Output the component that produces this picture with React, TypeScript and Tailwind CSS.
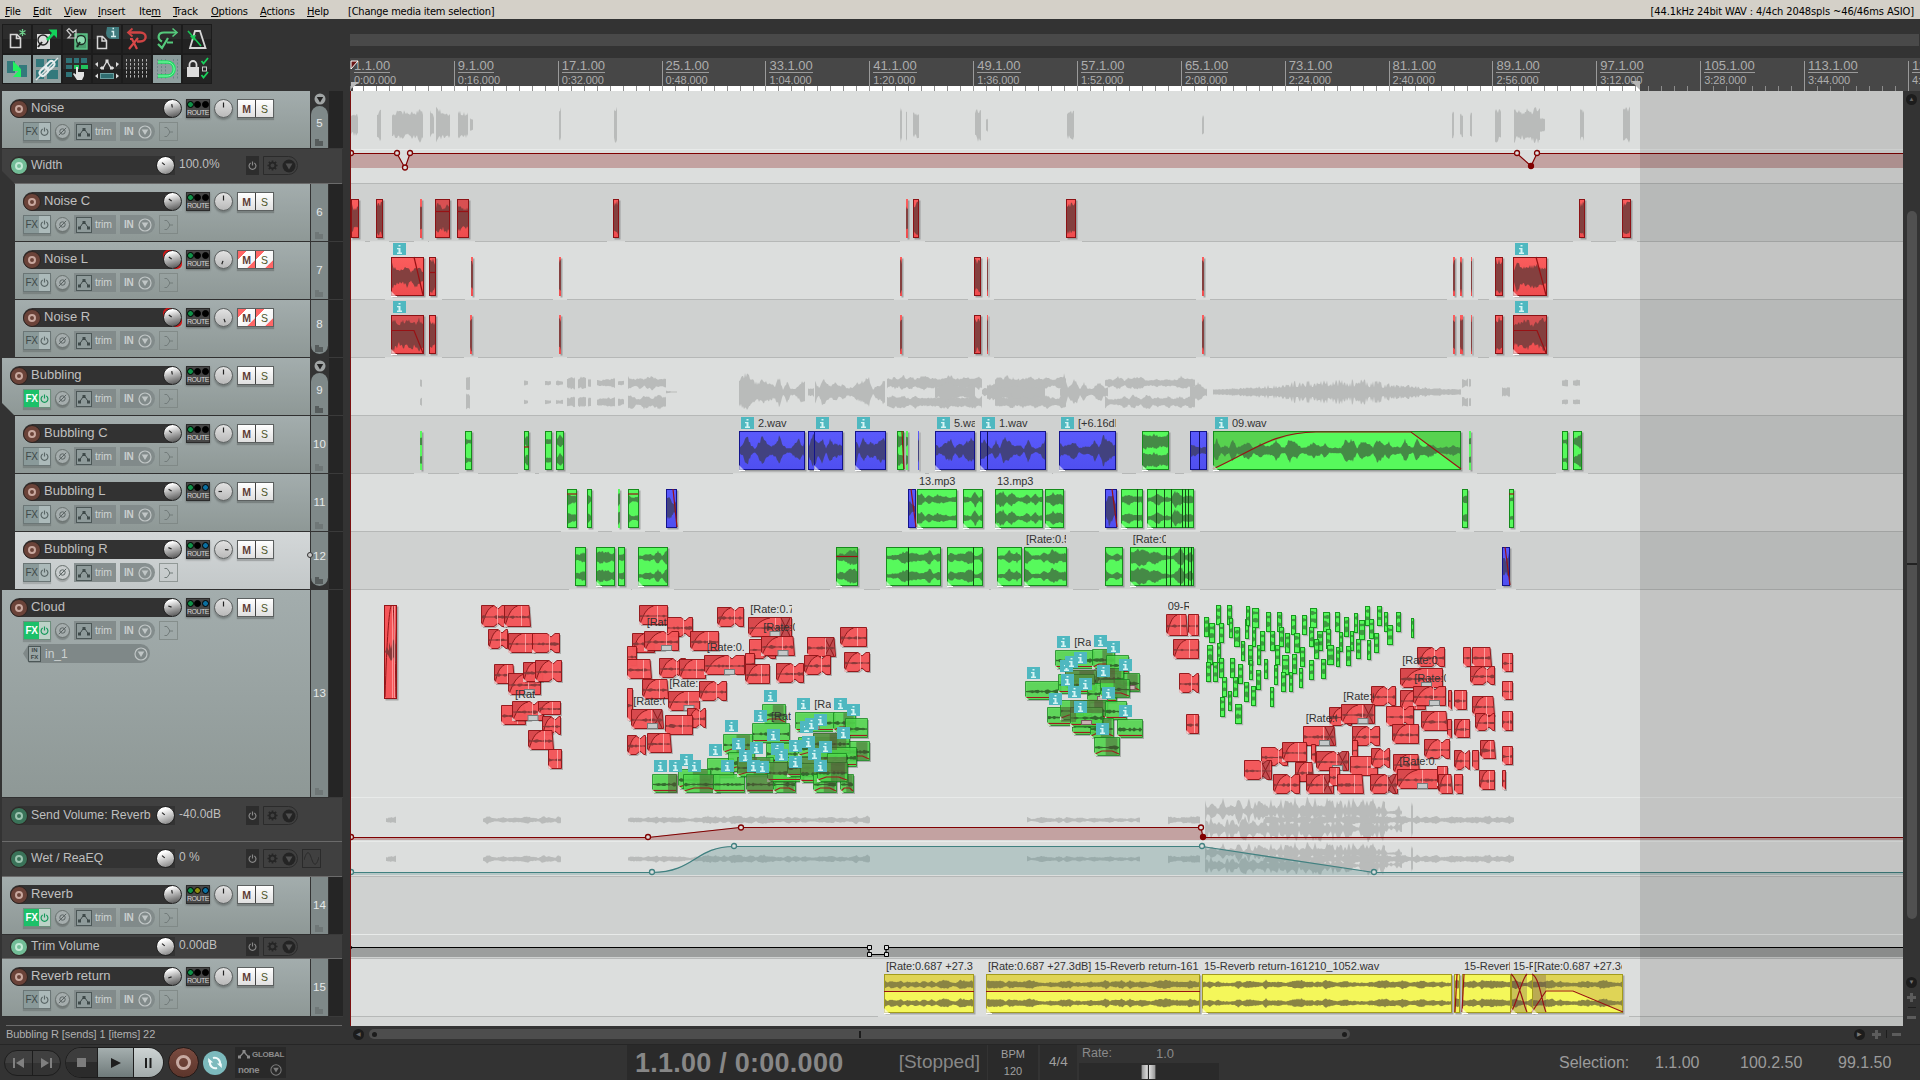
import React from "react";

/* ---------- deterministic wave forms ---------- */

function rng(seed: number) {
  let s = (seed * 7919 + 12345) % 2147483647;
  return () => {
    s = (s * 16807) % 2147483647;
    return s / 2147483647;
  };
}

function wavePath(w: number, mid: number, amp: number, seed: number, floor = 0.25, x0 = 0, lump = 4, pow = 1.7) {
  const r = rng(seed + 3);
  for (let i = 0; i < 5; i++) r();
  const n = Math.max(2, Math.round(w));
  const knots: number[] = [];
  for (let i = 0; i <= n / lump + 2; i++) knots.push(floor + (1 - floor) * Math.pow(r(), pow));
  const up: string[] = [];
  const dn: string[] = [];
  for (let i = 0; i <= n; i++) {
    const k = i / lump;
    const a = Math.floor(k);
    const t = k - a;
    const base = knots[a] * (1 - t) + knots[a + 1] * t;
    const u = Math.max(0.5, amp * base * (0.65 + 0.35 * r()));
    const d = Math.max(0.5, amp * base * (0.65 + 0.35 * r()));
    up.push((x0 + (i * w) / n).toFixed(1) + "," + (mid - u).toFixed(1));
    dn.push((x0 + (i * w) / n).toFixed(1) + "," + (mid + d).toFixed(1));
  }
  return "M" + up.join("L") + "L" + dn.reverse().join("L") + "Z";
}

/* ---------- small shared parts ---------- */

const Power = ({ c, s = 9 }: { c: string; s?: number }) => (
  <svg width={s} height={s} viewBox="0 0 10 10" fill="none" stroke={c} strokeWidth="1.3">
    <path d="M3 2.2A3.8 3.8 0 1 0 7 2.2M5 .5V5" />
  </svg>
);

const Knob = ({ angle, kind = "vol", ring = false, bright = false }: { angle: number; kind?: string; ring?: boolean; bright?: boolean }) => (
  <div
    className={
      "flex size-[19px] shrink-0 items-center justify-center " +
      (ring ? "rounded-[5px] bg-[linear-gradient(135deg,#cf1616_24%,transparent_25%,transparent_78%,#cf1616_79%)]" : "rounded-full")
    }
  >
    <div
      className={
        "flex size-full items-center justify-center rounded-full border " +
        (kind === "vol"
          ? "border-[#222] " + (bright ? "bg-[linear-gradient(160deg,#fff_20%,#c8c8c8_55%,#777_100%)]" : "bg-[linear-gradient(165deg,#fff_15%,#b5b5b5_48%,#555_95%)]")
          : "border-[#5a5e5e] bg-[linear-gradient(180deg,#e2e2e2,#b9b9b9)] shadow-[0_2px_2px_rgba(0,0,0,.25)]")
      }
    >
      <svg width="17" height="17" viewBox="-8.5 -8.5 17 17" className="shrink-0">
        <path d={kind === "vol" ? "M0 -1V-4.5" : Math.abs(angle) > 1 ? "M0 -1.5V-5" : "M0 -1V-6"} stroke="#222" strokeWidth="1.2" transform={`rotate(${angle})`} />
      </svg>
    </div>
  </div>
);

const Rec = ({ on }: { on: string }) => (
  <div
    className={
      "flex size-[18px] shrink-0 items-center justify-center rounded-full border border-[#2c2422] " +
      (on === "rec" ? "bg-[#6b4339]" : on === "env" ? "bg-[#3a7359]" : "bg-[#72bd97]")
    }
  >
    <div className={"size-[8px] rounded-full border-2 " + (on === "rec" ? "border-[#c9a89f]" : on === "env" ? "border-[#9cc4b0]" : "border-[#c4ead6]")} />
  </div>
);

const DownCircle = ({ c, s = 14 }: { c: string; s?: number }) => (
  <svg width={s} height={s} viewBox="0 0 14 14">
    <circle cx="7" cy="7" r="6" fill="none" stroke={c} strokeWidth="1.2" />
    <path d="M3.7 4.5H10.3L7 10Z" fill={c} />
  </svg>
);

/* ---------- track control panels ---------- */

type Track = {
  name: string;
  idx: string;
  h: number;
  child?: boolean;
  selected?: boolean;
  fx?: boolean;
  vol: number;
  pan: number;
  dots?: string[];
  striped?: boolean;
  input?: boolean;
  folder?: "top" | "last";
  cut?: boolean;
  dimFolder?: boolean;
};

const G = "#109048";
const B = "#0b6fa0";
const K = "#000";

function TrackPanel({ t }: { t: Track }) {
  return (
    <div className="flex" style={{ height: t.h }}>
      <div
        className={
          "flex flex-col border-b border-[#303030] pt-[8px] " +
          (t.child ? "ml-[15px] w-[295px] pl-[8px] " : "ml-[2px] w-[308px] pl-[8px] ") +
          (t.cut ? "[clip-path:polygon(0_0,100%_0,100%_100%,13px_100%,0_calc(100%-13px))] " : "") +
          (t.selected ? "bg-[linear-gradient(180deg,#d3d7d8,#c3c8c9)]" : "bg-[linear-gradient(180deg,#a3adad,#8e9896)]")
        }
      >
        <div className="flex h-[19px] items-center">
          <div className={"flex h-[19px] items-center justify-between rounded-l-full bg-[#323232] " + (t.child ? "w-[159px]" : "w-[172px]")}>
            <Rec on="rec" />
            <span className="mt-[-2px] ml-[3px] flex-1 whitespace-pre text-[13px] leading-[18px] text-[#c0c0c0]">{t.name}</span>
            <div className={"flex h-[19px] w-[20px] justify-end " + (t.selected ? "bg-[linear-gradient(90deg,#323232_50%,#d0d4d5_50%)]" : "bg-[linear-gradient(90deg,#323232_50%,#a0aaaa_50%)]")}>
              <Knob angle={t.vol} ring={t.striped} />
            </div>
          </div>
          <div className="ml-[4px] flex h-[19px] w-[24px] flex-col items-center border border-[#2b2b2b] bg-[#474747] shadow-[0_1px_2px_rgba(0,0,0,.3)]">
            <div className="flex h-[8px] w-full items-center justify-around">
              {(t.dots || [G, K, K]).map((d, i) => (
                <div key={i} className="size-[7px] rounded-full border border-black" style={{ backgroundColor: d }} />
              ))}
            </div>
            <span className="text-[7px] leading-[9px] tracking-[-0.5px] text-[#d4d4d4]">ROUTE</span>
          </div>
          <div className="ml-[4px]">
            <Knob angle={t.pan} kind="pan" />
          </div>
          <div className="ml-[4px] flex h-[19px] w-[37px] border border-[#5c6060] text-center text-[10.500px] font-bold leading-[18px] shadow-[0_2px_1px_rgba(0,0,0,.2)]">
            <div className={"flex-1 border-r border-[#444] text-[#5f3e36] " + (t.striped ? "bg-[linear-gradient(135deg,#f66_24%,#fff_26%,#f4f4f4_76%,#f66_78%)]" : "bg-[linear-gradient(180deg,#fff,#e0e0e0)]")}>M</div>
            <div className={"flex-1 font-normal text-[#4c5428] " + (t.striped ? "bg-[linear-gradient(135deg,#f66_24%,#fff_26%,#f4f4f4_76%,#f66_78%)]" : "bg-[linear-gradient(180deg,#fff,#e0e0e0)]")}>S</div>
          </div>
        </div>
        <div className={"mt-[4px] flex h-[19px] items-center " + (t.child ? "" : "ml-[13px]")}>
          <div className={"flex h-[19px] w-[28px] border text-[10px] leading-[17px] shadow-[0_2px_1px_rgba(0,0,0,.15)] " + (t.fx ? "border-[#6d8f7d] font-bold" : "border-[#6b7676]")}>
            <div className={"w-[15px] text-center tracking-[-0.3px] " + (t.fx ? "bg-[#1cc069] text-white" : "bg-[#8a9a9a] text-[#3f4949]")}>FX</div>
            <div className={"flex flex-1 items-center justify-center " + (t.fx ? "bg-[#bcd3c8]" : "bg-[#acbaba]")}>
              <Power c={t.fx ? "#13985a" : "#5a6666"} />
            </div>
          </div>
          <div
            className={
              "ml-[4px] flex size-[15px] items-center justify-center rounded-full border border-[#69716f] shadow-[0_2px_1px_rgba(0,0,0,.2)] " + (t.selected ? "bg-[#c9cdce]" : "bg-[#a5adad]")
            }
          >
            <svg width="9" height="9" viewBox="0 0 9 9" fill="none" stroke="#5b6464">
              <circle cx="4.5" cy="4.5" r="2.7" />
              <path d="M.8 8.2L8.2.8" />
            </svg>
          </div>
          <div className="ml-[4px] flex h-[19px] w-[42px] items-center bg-[#7f8888]/90 pl-[2px]">
            <div className="flex h-[16px] w-[16px] items-center justify-center border border-[#4c5757] bg-[#8f9b9b]">
              <svg width="12" height="10" viewBox="0 0 12 10">
                <path d="M1.5 8L5 3H7L10.5 8" fill="none" stroke="#3f4a4a" />
                <path d="M0 6.5h3v3H0zM4.5 1h3v3h-3zM9 6.5h3v3H9z" fill="#3f4a4a" />
              </svg>
            </div>
            <span className="ml-[3px] text-[10.500px] tracking-[-0.2px] text-[#cdd3d3]">trim</span>
          </div>
          <div className="ml-[4px] flex h-[19px] w-[35px] items-center rounded-r-full bg-[#7f8888]/90 pl-[4px]">
            <span className="text-[10px] font-bold tracking-[-0.3px] text-[#c9cfcf]">IN</span>
            <span className="ml-[5px]">
              <DownCircle c="#c0c6c6" />
            </span>
          </div>
          <div className="ml-[4px] flex h-[19px] w-[19px] items-center justify-center border border-[#79827f]/70">
            <svg width="11" height="12" viewBox="0 0 11 12" fill="none" stroke="#737c7b">
              <path d="M1.500 1.500H4L6.500 5V7L4 10.500H1.500M6.500 6H10" />
            </svg>
          </div>
        </div>
        {t.input && (
          <div className="mt-[4px] ml-[13px] flex h-[19px] w-[127px] items-center rounded-r-full bg-[#7f8888] [clip-path:polygon(0_50%,6px_0,100%_0,100%_100%,6px_100%)] pl-[5px]">
            <div className="flex h-[16px] w-[13px] flex-col items-center border border-[#4c5757] bg-[#9aa5a5] text-[6px] font-bold leading-[7px] text-[#3c4646]">
              <span>IN</span>
              <span>FX</span>
            </div>
            <span className="ml-[4px] flex-1 text-[12px] text-[#ccd1d1]">in_1</span>
            <span className="mr-[2px]">
              <DownCircle c="#c0c6c6" />
            </span>
          </div>
        )}
      </div>
      <div className="ml-px flex h-full w-[17px] flex-col">
        {t.folder === "top" && (
          <div className="flex h-[15px] items-center justify-center">
            <svg width="12" height="12" viewBox="0 0 12 12">
              <circle cx="6" cy="6" r="5.500" fill="#a0a4a4" />
              <path d="M2.800 4H9.200L6 9.500Z" fill="#222" />
            </svg>
          </div>
        )}
        <div
          className={
            "relative flex flex-1 items-center justify-center bg-[#7f8989] " +
            (t.folder === "top" ? "mb-px rounded-t-[9px]" : t.folder === "last" ? "mb-[4px] rounded-b-[9px]" : "mb-px")
          }
        >
          <span className={"text-[11.500px] text-[#e4e8e8] " + (t.folder === "top" ? "mt-[-6px]" : t.folder === "last" ? "mt-[-4px]" : "")}>{t.idx}</span>
          <svg className="absolute bottom-[2px] left-[4px]" width="8" height="7" viewBox="0 0 8 7">
            <path d="M0 0H4V2H8V7H0Z" fill={t.dimFolder ? "#6f7777" : "#565c5c"} />
          </svg>
        </div>
      </div>
      <div className="ml-px h-full w-[14px] border-b border-[#3a3a3a] bg-[#252525]" />
    </div>
  );
}

function EnvPanel({ name, value, h, armed, cut, sine, pt }: { name: string; value: string; h: number; armed?: boolean; cut?: boolean; sine?: boolean; pt: number }) {
  return (
    <div
      className={"ml-[2px] w-[340px] border-b border-[#6b6b6b] bg-[#404040] pl-[8px] " + (cut ? "[clip-path:polygon(0_0,100%_0,100%_100%,13px_100%,0_calc(100%-13px))]" : "")}
      style={{ height: h, paddingTop: pt }}
    >
      <div className="flex h-[19px] items-center">
        <div className="flex h-[19px] w-[165px] items-center rounded-l-full bg-[#333]">
          <Rec on={armed ? "armed" : "env"} />
          <span className="mt-[-1px] ml-[3px] flex-1 whitespace-pre text-[12.300px] leading-[18px] text-[#bfbfbf]">{name}</span>
          <Knob angle={-50} bright />
        </div>
        <span className="mt-[-3px] ml-[4px] w-[67px] text-[12px] text-[#bfbfbf]">{value}</span>
        <div className="flex h-[19px] w-[13px] items-center justify-center bg-[#2d2d2d]">
          <Power c="#888" />
        </div>
        <div className="ml-[4px] flex h-[19px] w-[35px] items-center rounded-r-full border border-[#2b2b2b] pl-[3px]">
          <svg width="11" height="11" viewBox="-6 -6 12 12">
            <circle r="3.200" fill="none" stroke="#262626" strokeWidth="2" />
            <path d="M0-5.500V-3M0 5.500V3M-5.500 0H-3M5.500 0H3M-4-4L-2-2M4 4L2 2M-4 4L-2 2M4-4L2-2" stroke="#262626" strokeWidth="1.800" />
          </svg>
          <svg className="ml-[4px]" width="14" height="14" viewBox="0 0 14 14">
            <circle cx="7" cy="7" r="6.500" fill="#242424" />
            <path d="M3.500 4.500H10.500L7 10.500Z" fill="#505050" />
          </svg>
        </div>
        {sine && (
          <div className="ml-[4px] flex size-[19px] items-center justify-center border border-[#2b2b2b]">
            <svg width="15" height="13" viewBox="0 0 15 13" fill="none" stroke="#2b2b2b">
              <path d="M0 8C3-2 5-1 7.500 6.500S12 15 15 5" />
            </svg>
          </div>
        )}
      </div>
    </div>
  );
}

/* ---------- toolbar ---------- */

const TB = ({ children, on }: { children: React.ReactNode; on?: boolean }) => (
  <div className={"flex size-[28px] items-center justify-center " + (on ? "bg-[linear-gradient(180deg,#8b9c9c,#91a1a1)]" : "bg-[linear-gradient(180deg,#2c2c2c_50%,#222_50%)]")}>
    <svg width="28" height="28" viewBox="0 0 28 28" fill="none">
      {children}
    </svg>
  </div>
);

const page = "M7.500 9.500H14L17.500 13V22.500H7.500ZM13.500 9.500V13.500H17.500";

function Toolbar() {
  return (
    <div className="ml-[2px] mt-[5px] grid w-[210px] grid-cols-7 gap-[2px] bg-[#1c1c1c] p-px">
      <TB>
        <path d={page} stroke="#d5d5d5" strokeWidth="1.600" />
        <path d="M19.500 4V11M16.500 5.500L22.500 9.500M22.500 5.500L16.500 9.500" stroke="#6fd08d" strokeWidth="1.300" />
      </TB>
      <TB>
        <rect x="4" y="9" width="13" height="15" fill="#dcdcdc" />
        <circle cx="10" cy="15" r="5" stroke="#222" fill="#dcdcdc" strokeWidth="1.400" />
        <path d="M9 17L5 22" stroke="#222" strokeWidth="2" />
        <path d="M13 14L19 8L15.500 4.500H24V13L21 10L15 16Z" fill="#13d25a" />
      </TB>
      <TB>
        <rect x="12" y="9" width="12" height="15" stroke="#5ec98a" strokeWidth="1.400" fill="#4c9f70" />
        <circle cx="18" cy="15" r="4.500" stroke="#1c2e24" fill="#8edbb0" strokeWidth="1.300" />
        <path d="M17 17L14 22" stroke="#1c2e24" strokeWidth="2" />
        <path d="M4 5.500L6 3.500L10 7.500L13 5V13H5L8 10Z" stroke="#ccc" strokeWidth="1.200" />
      </TB>
      <TB>
        <path d="M4.500 11.500H9.500L13.500 15.500V23.500H4.500ZM9 11.500V16H13.500" stroke="#d5d5d5" strokeWidth="1.500" />
        <path d="M14 2H26V14H20A6 6 0 0 1 13 8Z" fill="#3f7b7e" />
        <path d="M18.500 6.500H20.500V11.500M18 11.500H23M19.500 3.500H21" stroke="#d9f0f0" strokeWidth="1.400" />
      </TB>
      <TB>
        <path d="M6 7.500H17C24.500 7.500 24.500 16.500 17 16.500H14" stroke="#cf4444" strokeWidth="2.400" />
        <path d="M9.500 3.500L5 7.500L9.500 11.500" stroke="#cf4444" strokeWidth="1.800" />
        <path d="M7 14H9L14 24M15 13L6 24" stroke="#d84848" strokeWidth="2.200" />
      </TB>
      <TB>
        <path d="M23 7.500H11C4.500 7.500 4 14 9 16.500" stroke="#55c97c" strokeWidth="2.200" />
        <path d="M19.500 3.500L24 7.500L19.500 11.500" stroke="#55c97c" strokeWidth="1.600" />
        <path d="M5 19L9 23L15 13M14 17.500H20" stroke="#55c97c" strokeWidth="2.200" />
      </TB>
      <TB>
        <path d="M12 6H17L22.500 23H7Z" stroke="#d5d5d5" strokeWidth="1.800" />
        <path d="M5 6L18 21" stroke="#19c856" strokeWidth="1.600" />
        <path d="M7 11L13 10L11 16Z" fill="#19c856" />
      </TB>
      <TB on>
        <path d="M4 6H12V18H4ZM16 10H24V22H16Z" fill="#33797c" />
        <path d="M10 6L17 13V16H10Z" fill="#21f35f" />
        <path d="M18 13V22H10Z" fill="#21f35f" />
      </TB>
      <TB on>
        <path d="M3 4H11V12H3ZM14 4H25V12H14ZM3 15H11V24H3ZM14 15H25V24H14Z" fill="#33797c" />
        <path d="M3 25L25 3" stroke="#dfe6e6" strokeWidth="1.500" />
        <rect x="6" y="13.500" width="10" height="6" rx="3" transform="rotate(-45 11 16.500)" stroke="#e6eded" strokeWidth="2" />
        <rect x="12" y="7.500" width="10" height="6" rx="3" transform="rotate(-45 17 10.500)" stroke="#e6eded" strokeWidth="2" />
      </TB>
      <TB>
        <path d="M3 3H9V8H3ZM11 3H16V8H11ZM18 3H24V8H18ZM3 10H9V14H3ZM3 17H9V22H3Z" fill="#2f7377" />
        <path d="M11 10H16V14H11ZM18 10H25V14H18Z" fill="#21c45d" />
        <path d="M13 12H15V17H21V21L19 25H14L10 19L11 18L13 19.500Z" fill="#e2e2e2" />
      </TB>
      <TB>
        <path d="M7 13L10 13L14 6L18 13H21" stroke="#ddd" strokeWidth="1.300" />
        <path d="M12.500 4.500h3v3h-3zM8 11.500h3v3H8zM17 11.500h3v3h-3z" fill="#ddd" />
        <path d="M2 9L5 7V12ZM26 9L23 7V12ZM2 21L5 18.500V23.500ZM26 21L23 18.500V23.500Z" fill="#ddd" />
        <rect x="7.500" y="18.500" width="13" height="5" fill="#2f6d70" stroke="#6c9fa0" />
      </TB>
      <TB>
        <path d="M3.500 4V24M7.500 4V24M11.500 4V24M15.500 4V24M19.500 4V24M23.500 4V24" stroke="#b0b0b0" strokeDasharray="2.500 1.500" />
      </TB>
      <TB on>
        <path d="M4.500 4V24M8.500 4V24M12.500 4V24M20.500 4V24M24.500 4V24" stroke="#6b8586" strokeDasharray="2 1.500" />
        <path d="M5 7H14C23.500 7 23.500 21 14 21H5" stroke="#1fe063" strokeWidth="3.400" />
        <path d="M5 7H14C23.500 7 23.500 21 14 21H5" stroke="#8ef5b1" strokeWidth="1" />
      </TB>
      <TB>
        <rect x="4" y="12" width="12" height="10" fill="#dcdcdc" />
        <path d="M6.500 12V9.500A3.500 3.500 0 0 1 13.500 9.500V12" stroke="#dcdcdc" strokeWidth="1.800" />
        <rect x="19.500" y="12" width="4" height="4" stroke="#ccc" />
        <path d="M18.500 6L20.500 8.500L25 3M18.500 20L20.500 22.500L25 17" stroke="#19d05a" strokeWidth="1.800" />
      </TB>
    </div>
  );
}

/* ---------- arrange view ---------- */

type Color = "r" | "g" | "b" | "y";
const FILL: Record<Color, [string, string, string, string, string]> = {
  r: ["#fb5d5d", "#ee4c4e", "#8c1215", "#84403f", "#d85052"],
  g: ["#57f95c", "#57f95c", "#158c1b", "#458a46", "#57d24f"],
  b: ["#5a5afc", "#4f4ff0", "#13138c", "#42427f", "#4d4dd0"],
  y: ["#f4f75a", "#f4f75a", "#a39c1c", "#8a8443", "#dfd456"],
};

type Clip = {
  x: number;
  e: number;
  c: Color;
  label?: string;
  info?: boolean;
  stereo?: boolean;
  splits?: number[];
  red?: string;
  dark?: string;
  shade?: string;
  floor?: number;
  amp?: number;
  pow?: number;
};

const Info = ({ x, y }: { x: number; y: number }) => (
  <div className="absolute flex h-[12px] w-[13px] items-center justify-center bg-[#4fb8c0]" style={{ left: x, top: y }}>
    <svg width="7" height="9" viewBox="0 0 7 9">
      <path d="M2.500 0H4.500V1.500H2.500ZM1 3H4.500V7.500H6V9H1V7.500H2.500V4.300H1Z" fill="#d4f4f4" />
    </svg>
  </div>
);

function ClipView({ k, seed }: { k: Clip; seed: number }) {
  const w = k.e - k.x;
  const h = 39;
  const f = FILL[k.c];
  const fl = k.floor ?? 0.3;
  const am = k.amp ?? 1;
  const pw = k.pow ?? 1.7;
  const id = "c" + seed;
  const left = k.x - 350;
  return (
    <>
      <svg className="absolute top-[15px] overflow-visible" style={{ left }} width={w} height={h}>
        <defs>
          <linearGradient id={id} x1="0" x2="0" y1="0" y2="1">
            <stop offset="0" stopColor={f[0]} />
            <stop offset="1" stopColor={f[1]} />
          </linearGradient>
        </defs>
        <rect x="-6" y="42" width={w + 12} height="1" fill="#d9dbda" />
        <rect x="1.500" y="1.500" width={w} height={h} fill="#000" opacity=".25" />
        <rect width={w} height={h} fill={`url(#${id})`} />
        {k.dark && <path d={k.dark} fill={f[4]} />}
        {k.stereo ? (
          <>
            <path d={wavePath(w, 10.500, 9.500 * am, seed, fl, 0, 4, pw)} fill={f[3]} />
            <path d={wavePath(w, 29, 9.500 * am, seed, fl, 0, 4, pw)} fill={f[3]} />
          </>
        ) : (
          <path d={wavePath(w, 19.500, 19 * am, seed, fl, 0, 4, pw)} fill={f[3]} />
        )}
        {k.shade && <path d={k.shade} fill="#4a2a4a" opacity=".25" />}
        {w > 4 && <rect x=".5" y=".5" width={w - 1} height={h - 1} fill="none" stroke={f[2]} />}
        {(k.splits || []).map((s) => (
          <path key={s} d={`M${s - k.x + 0.5} 0V39`} stroke={k.c === "b" ? "#101060" : "#124d14"} />
        ))}
        {k.red && <path d={k.red} fill="none" stroke="#981114" strokeWidth="1.200" />}
        {w > 18 && <path d="M0 34L5 39H0Z" fill="#fff" opacity=".6" />}
        {w > 18 && <rect x="0" y="39" width="6" height="1" fill="#fff" />}
      </svg>
      {k.info && <Info x={left + 2} y={1} />}
      {k.label && (
        <span
          className="absolute top-[1px] overflow-hidden whitespace-pre text-[11px] leading-[13px] tracking-[-0.05px] text-[#333]"
          style={{ left: left + (k.info ? 19 : 2), width: Math.max(10, w - (k.info ? 19 : 3)) }}
        >
          {k.label}
        </span>
      )}
    </>
  );
}

const clip = (c: Color, x: number, e: number, o: Partial<Clip> = {}): Clip => ({ x, e, c, ...o });
const R = (x: number, e: number, o: Partial<Clip> = {}) => clip("r", x, e, { floor: 0.55, pow: 1, ...o });
const S = (x: number, e: number, o: Partial<Clip> = {}) => clip("g", x, e, { stereo: true, floor: 0.2, ...o });
const U = (x: number, e: number, o: Partial<Clip> = {}) => clip("b", x, e, { floor: 0.1, pow: 1.4, ...o });
const Y = (x: number, e: number, o: Partial<Clip> = {}) => clip("y", x, e, { stereo: true, floor: 0.35, amp: 0.55, pow: 1.3, ...o });

const noiseC = [
  R(351, 359), R(376, 383, { floor: 0.9 }), R(420, 422), R(435, 450, { red: "M0 12.500H15", dark: "M0 0H15V12H0Z" }), R(457, 469, { red: "M0 12.500H12", dark: "M0 0H12V12H0Z" }),
  R(613, 619, { floor: 0.9 }), R(906, 908), R(913, 919), R(1066, 1076, { floor: 0.8 }), R(1579, 1585, { floor: 0.8 }), R(1622, 1631, { floor: 0.8 }),
];
const thin = (a: number[][]) => a.map(([x, e]) => R(x, e, { floor: 0.9 }));
const noiseL = [
  R(391, 424, { info: true, floor: 0.2, red: "M23 0L32 38" }), R(429, 436, { red: "M0 15.500H7" }), R(471, 473),
  ...thin([[559, 561], [900, 902], [974, 981], [987, 988], [1202, 1204], [1453, 1455], [1460, 1462], [1471, 1472], [1495, 1503]]),
  R(1513, 1547, { info: true, floor: 0.2, red: "M23 0L33 38" }),
];
const noiseR = [
  R(391, 424, { info: true, red: "M0 15.500H23L32 38", dark: "M0 0H33V38L24 15H0Z" }), R(429, 436), R(470, 472),
  ...thin([[559, 561], [900, 902], [974, 981], [987, 988], [1202, 1204], [1453, 1455], [1460, 1463], [1471, 1472], [1495, 1503]]),
  R(1513, 1547, { info: true, red: "M0 15.500H24L33 38", dark: "M0 0H34V38L25 15H0Z" }),
];
const bubC = [
  S(420, 422), S(465, 472), S(524, 529, { red: "M0 16H5" }), S(545, 552), S(556, 564),
  U(739, 805, { info: true, label: "2.wav" }), U(808, 815), U(814, 843, { info: true }), U(855, 886, { info: true }),
  S(897, 904, { red: "M5 0L7 38" }), S(906, 908), U(918, 919), U(935, 975, { info: true, label: "5.wav", amp: 0.75 }),
  U(980, 1046, { info: true, label: "1.wav", splits: [987], amp: 0.85 }), U(1059, 1116, { info: true, label: "[+6.16dB]" }),
  S(1142, 1169, { floor: 0.6 }), U(1190, 1207, { splits: [1199] }),
  clip("g", 1213, 1461, { info: true, label: "09.wav", floor: 0.2, amp: 0.75, dark: "M0 0H103C60 5 40 20 0 38ZM248 0V38L198 0Z", red: "M0 38C40 20 60 1 103 1H198L248 38" }),
  S(1469, 1471), S(1562, 1568), S(1573, 1582),
];
const bubL = [
  S(567, 577, { red: "M0 5H10" }), S(587, 592), S(618, 620), S(628, 639, { red: "M0 5H10" }), U(666, 677, { red: "M7 0L11 38" }),
  U(908, 916, { red: "M3 0L8 38" }), S(917, 957, { label: "13.mp3" }), S(963, 983), S(995, 1043, { label: "13.mp3" }), S(1045, 1064),
  U(1105, 1117, { red: "M7 0L12 38" }), S(1121, 1143, { splits: [1137] }), S(1147, 1194, { splits: [1156, 1164, 1171, 1182, 1185, 1188] }), S(1462, 1468), S(1509, 1514, { red: "M0 5H5" }),
];
const bubR = [
  S(575, 586), S(596, 615), S(618, 625), S(638, 668), S(836, 858, { red: "M0 9.500H22", dark: "M0 0H22V9H0Z" }),
  S(886, 941, { splits: [908] }), S(947, 983, { splits: [973] }), S(997, 1022), S(1024, 1067, { label: "[Rate:0.500" }),
  S(1105, 1123), S(1130, 1194, { splits: [1166, 1170, 1180, 1184, 1188, 1191] }), U(1502, 1510, { red: "M3 0L8 38" }),
];
const reverb = [
  Y(884, 974, { label: "[Rate:0.687 +27.3dB]", dark: "M0 0H90V17H0Z", red: "M0 17.500H90" }),
  Y(986, 1200, { label: "[Rate:0.687 +27.3dB] 15-Reverb return-161", dark: "M0 0H214V17H0Z", red: "M0 17.500H214" }),
  Y(1202, 1452, { label: "15-Reverb return-161210_1052.wav" }),
  Y(1454, 1460, { red: "M1 38L3 0" }),
  Y(1462, 1511, { label: "15-Reverb", red: "M0 38L2 0" }),
  Y(1511, 1534, { label: "15-F", shade: "M0 0H16V39H0Z", red: "M0 0C8 6 12 30 16 38M0 38C6 30 10 6 16 0" }),
  Y(1532, 1623, { label: "[Rate:0.687 +27.3dB]", dark: "M14 16H41L91 38V0H0V38Z", shade: "M0 0H14V39H0Z", red: "M0 38L14 17H41L91 38M0 0C8 4 10 30 14 38" }),
];

/* Cloud items: positions in thirds of a pixel, relative to the left edge given for each group */
type Q = [number, number, number, number?];
const redA: Q[] = [
  [63, 45, 75, 66], [133, 45, 80, 66], [84, 118, 60], [144, 129, 80], [215, 129, 84], [102, 222, 62], [144, 250, 98, 66], [189, 216, 60], [225, 211, 80, 66],
  [123, 346, 75], [156, 334, 95], [235, 334, 70, 42], [247, 377, 58, 57], [204, 421, 78], [264, 478, 42],
];
const redB: Q[] = [
  [117, 45, 87], [200, 82, 78], [97, 130, 70], [133, 122, 104], [270, 124, 86], [82, 168, 30], [82, 208, 76], [178, 205, 80], [236, 208, 80], [313, 196, 123],
  [127, 266, 80], [82, 295, 18, 98], [205, 304, 96], [298, 274, 83], [94, 358, 100], [262, 354, 56], [196, 376, 84], [82, 436, 58], [140, 428, 76], [352, 52, 82],
  [445, 82, 133], [448, 146, 80], [484, 138, 103], [434, 188, 30], [434, 223, 76], [528, 220, 84], [622, 142, 86], [611, 194, 80], [721, 112, 82], [732, 187, 78],
];
const greenB: Q[] = [
  [487, 343, 73], [457, 400, 115], [370, 433, 90], [586, 367, 120], [700, 367, 70], [735, 385, 70], [735, 454, 75], [322, 505, 80], [235, 536, 100],
  [157, 553, 75, 58], [250, 553, 110, 58], [340, 553, 97, 58], [385, 486, 80], [497, 460, 100], [410, 500, 110], [437, 553, 90, 58], [520, 553, 70, 58],
  [500, 515, 110], [595, 440, 120], [560, 500, 120], [640, 430, 110], [600, 520, 80], [638, 553, 72, 58], [660, 470, 110], [720, 553, 43, 58], [680, 490, 60], [650, 515, 93],
];
const badgesB = [
  [512, 318], [610, 342], [721, 342], [761, 360], [481, 377], [394, 408], [520, 436], [620, 412], [635, 403], [662, 390], [731, 430], [416, 462], [346, 480], [470, 474],
  [532, 478], [586, 468], [624, 457], [677, 470], [436, 498], [545, 495], [643, 492], [182, 528], [226, 528], [260, 511], [284, 528], [382, 527], [460, 528], [488, 530], [586, 516], [661, 528],
];
const greenC: Q[] = [
  [106, 181, 116, 58], [217, 178, 70], [257, 196, 70, 57], [292, 250, 70, 57], [15, 274, 108, 58], [135, 240, 95], [115, 252, 110], [230, 235, 80], [200, 280, 90],
  [240, 268, 90, 58], [82, 352, 80, 58], [120, 330, 90], [157, 375, 75], [190, 330, 75], [255, 334, 66, 58], [210, 385, 72], [292, 388, 79, 58], [223, 442, 79, 58], [150, 350, 100],
];
const badgesC = [
  [130, 156], [241, 153], [280, 171], [40, 249], [140, 228], [154, 216], [182, 204], [316, 225], [250, 243], [142, 270], [196, 283], [164, 307], [106, 328], [265, 310], [181, 350], [316, 363], [247, 417],
];
const strips: Q[] = [
  [553, 82, 16], [568, 100, 18], [589, 46, 16], [598, 100, 14], [622, 46, 15], [628, 85, 12], [643, 110, 18], [562, 166, 18], [592, 160, 12], [664, 154, 12], [676, 88, 13], [679, 49, 12],
  [697, 55, 22], [697, 112, 12], [739, 67, 15], [751, 122, 15], [721, 124, 15], [772, 67, 15], [778, 112, 14], [685, 166, 16], [712, 166, 12], [766, 166, 14], [796, 130, 14], [814, 76, 15],
  [823, 130, 18], [847, 76, 15], [871, 55, 22], [868, 110, 14], [892, 124, 18], [910, 67, 20], [946, 67, 15], [973, 82, 15], [919, 118, 14], [958, 127, 12], [991, 124, 12], [1003, 70, 12],
  [1018, 91, 18], [1036, 49, 15], [1048, 88, 15], [1072, 49, 15], [1093, 67, 12], [1102, 106, 18], [1129, 67, 15], [1063, 130, 15], [1173, 85, 10], [1009, 148, 15], [1042, 151, 12],
  [979, 169, 15], [949, 172, 12], [922, 166, 22], [883, 148, 16], [841, 172, 15], [787, 196, 22], [817, 193, 14], [868, 211, 15], [904, 208, 15], [838, 235, 12], [808, 247, 12], [784, 247, 15],
  [763, 226, 13], [733, 208, 12], [751, 292, 12], [709, 241, 15], [688, 211, 12], [673, 277, 15], [694, 289, 15], [655, 223, 15], [631, 205, 15], [640, 260, 15], [598, 205, 16], [559, 216, 15],
  [580, 216, 15], [607, 262, 15], [625, 304, 12], [601, 322, 16], [646, 343, 22],
];
const redC: Q[] = [
  [438, 73, 66, 66], [505, 73, 33, 66], [459, 148, 78], [477, 250, 60], [498, 373, 38], [1192, 172, 85], [1141, 235, 130], [1330, 172, 24], [1357, 172, 60], [1351, 228, 76, 57],
  [1447, 190, 34, 58], [1447, 274, 34, 58], [1447, 364, 34], [1447, 469, 34, 58], [1447, 541, 13], [1054, 289, 76], [1141, 301, 78], [1180, 289, 100], [1285, 301, 13], [1303, 301, 38],
  [1357, 319, 70], [928, 352, 70, 58], [964, 343, 103], [1099, 349, 83], [1204, 364, 80], [1282, 388, 16, 58], [1303, 388, 49, 58], [1366, 370, 61, 54], [850, 409, 100], [997, 409, 85],
  [1117, 403, 81], [1213, 448, 79], [1380, 451, 47, 58], [724, 472, 82, 58], [787, 457, 75], [874, 463, 14, 56], [997, 451, 18, 56], [889, 484, 100], [991, 499, 84], [1054, 475, 58],
  [1120, 493, 80], [1303, 481, 49], [1357, 481, 20], [673, 511, 85], [826, 517, 56], [760, 553, 80], [859, 553, 85], [928, 532, 33, 56], [952, 553, 80], [1051, 553, 83], [1132, 538, 122],
  [1252, 529, 33], [1254, 553, 44], [1303, 553, 28], [1378, 541, 48],
];

function Grain({ q, ox, c, seed }: { q: Q; ox: number; c: "r" | "g" | "s"; seed: number }) {
  const x = Math.round(ox + q[0] / 3);
  const y = Math.round(q[1] / 3);
  const w = Math.round(q[2] / 3);
  const h = Math.round((q[3] ?? 60) / 3);
  const v = c === "r" && w > 14 ? seed % 4 : 0;
  const n = Math.round(w * 0.68);
  const outline =
    v === 1 || v === 3
      ? `M.5 .5H${n - 4}L${n} 4L${n + 4} .5H${w - 0.5}V${h - 0.5}H${n + 4}L${n} ${h - 4}L${n - 4} ${h - 0.5}H.5Z`
      : v === 2
        ? `M.5 .5H${w - 2}L${w - 0.5} ${h - 0.5}H.5Z`
        : `M.5 .5H${w - 0.5}V${h - 0.5}H.5Z`;
  if (c === "s")
    return (
      <svg className="absolute overflow-visible" style={{ left: x, top: y }} width={w} height={h}>
        <rect x="1.200" y="1.200" width={w} height={h} fill="#000" opacity=".2" />
        <rect x=".5" y=".5" width={w - 1} height={h - 1} fill="#57f95c" stroke="#17981f" />
        <path d={wavePath(w - 2, h * 0.62, Math.min(4, w / 2 + 1), seed, 0.5, 1, 2)} fill="#3f9a42" />
        <path d={wavePath(w - 2, h / 4, 2.500, seed + 5, 0.5, 1, 2)} fill="#3f9a42" />
      </svg>
    );
  const red = c === "r";
  return (
    <svg className="absolute overflow-visible" style={{ left: x, top: y }} width={w} height={h}>
      <path d={outline} transform="translate(1.500 1.500)" fill="#000" opacity=".22" />
      <path d={outline} fill={red ? "#f55659" : "#52dc4e"} stroke={red ? "#941518" : "#1c8c22"} opacity={red ? 0.96 : 0.85} />
      {red && w > 14 && seed % 5 !== 0 && (
        <>
          <path d={`M1 ${h - 1}C${w * 0.15} ${h * 0.5} ${w * 0.25} 3 ${w * 0.5} 1H1Z`} fill="#d8494d" />
          <path d={`M1 ${h - 1}C${w * 0.15} ${h * 0.5} ${w * 0.25} 3 ${w * 0.5} 1`} fill="none" stroke="#8c1a1c" />
        </>
      )}
      {red && w > 27 && seed % 3 === 0 && (
        <>
          <rect x={w - 11} y="1" width="9" height={h - 2} fill="#7a3a3e" opacity=".4" />
          <path d={`M${w - 11} 1L${w - 2} ${h - 1}M${w - 11} ${h - 1}L${w - 2} 1`} stroke="#8c1a1c" />
        </>
      )}
      <path d={wavePath(w - 2, h / 2 + 1, red ? 2.200 : 2.600, seed, 0.2, 1, 2)} fill={red ? "#8a3a3a" : "#336a2e"} />
      {red && w > 10 && <path d={`M${Math.round(w * 0.62) + 0.5} 1V${h - 1}`} stroke="#ffb0b0" opacity=".8" />}
      {!red && seed % 2 === 0 && <rect x={w * 0.45} y="1" width={w * 0.45} height={h - 2} fill="#4d4632" opacity=".42" />}
      {!red && <path d={seed % 2 ? `M1 ${h - 2.500}H${w - 1}` : `M1 ${h - 2}L${w * 0.3} ${h - 5}H${w * 0.7}L${w - 1} ${h - 2}`} fill="none" stroke="#a01b1e" strokeWidth="1.200" />}
      {!red && seed % 5 === 0 && <rect x={w * 0.35} y={h - 6.500} width="10" height="4" fill="#c9b3b3" stroke="#7a5a60" />}
      {red && w > 30 && <rect x={w * 0.5} y={h - 5.500} width="10" height="5" fill="#c5c9c9" stroke="#777b7b" />}
      <path d={`M0 ${h - 4}L4 ${h}H0Z`} fill="#fff" opacity=".7" />
    </svg>
  );
}

const CloudLabel = ({ ox, x, y, t, w }: { ox: number; x: number; y: number; t: string; w: number }) => (
  <span className="absolute overflow-hidden whitespace-pre text-[11px] leading-[13px] tracking-[-0.05px] text-[#333]" style={{ left: ox + x / 3, top: Math.round(y / 3 - 6), width: w }}>
    {t}
  </span>
);

/* regions where green items pile up and show through one another */
const piles: Q[] = [
  [250 * 3 + 640, 430, 70, 50], [250 * 3 + 510, 515, 90, 40], [250 * 3 + 600, 500, 140, 48], [250 * 3 + 440, 556, 80, 50], [250 * 3 + 410, 500, 60, 50], [250 * 3 + 203, 553, 30, 56],
  [670 * 3 + 135, 240, 90, 45], [670 * 3 + 122, 350, 45, 45], [670 * 3 + 225, 235, 60, 45], [670 * 3 + 150, 330, 100, 40],
];

function Cloud() {
  return (
    <>
      <svg className="absolute overflow-visible" style={{ left: 34, top: 15 }} width="13" height="94">
        <rect x="1.500" y="1.500" width="13" height="94" fill="#000" opacity=".25" />
        <rect x=".5" y=".5" width="12" height="93" fill="#f55659" stroke="#941518" />
        <path d="M1 92C3 30 5 8 7 1M12 92C11 40 11 20 9 1" fill="none" stroke="#941518" />
        <path d="M1 47L3 42L5 46V37L7 44L9 34L12 40V58L10 52L7 56L4 50Z" fill="#8a3a3a" />
        <path d="M8.500 1V93M10.500 1V93" stroke="#ffb0b0" opacity=".7" />
      </svg>
      {redA.map((q, i) => <Grain key={"a" + i} q={q} ox={110} c="r" seed={i + 1} />)}
      {redB.map((q, i) => <Grain key={"b" + i} q={q} ox={250} c="r" seed={i + 4} />)}
      {greenB.map((q, i) => <Grain key={"gb" + i} q={q} ox={250} c="g" seed={i + 2} />)}
      {greenC.map((q, i) => <Grain key={"gc" + i} q={q} ox={670} c="g" seed={i + 7} />)}
      {piles.map(([x, y, w, h = 0], i) => (
        <div key={"p" + i} className="absolute bg-[#5a4638]/45" style={{ left: x / 3, top: y / 3, width: w / 3, height: h / 3 }} />
      ))}
      {strips.map((q, i) => <Grain key={"s" + i} q={q} ox={670} c="s" seed={i + 1} />)}
      {redC.map((q, i) => <Grain key={"rc" + i} q={q} ox={670} c="r" seed={i + 2} />)}
      {badgesB.map(([x, y], i) => <Info key={"ib" + i} x={Math.round(250 + x / 3 - 6.5)} y={Math.round(y / 3 - 6)} />)}
      {badgesC.map(([x, y], i) => <Info key={"ic" + i} x={Math.round(670 + x / 3 - 6.5)} y={Math.round(y / 3 - 6)} />)}
      <CloudLabel ox={110} x={165} y={312} t="[Rate" w={20} />
      <CloudLabel ox={250} x={140} y={97} t="[Rate" w={20} />
      <CloudLabel ox={250} x={320} y={171} t="[Rate:0." w={37} />
      <CloudLabel ox={250} x={208} y={280} t="[Rate:" w={29} />
      <CloudLabel ox={250} x={100} y={333} t="[Rate:0" w={32} />
      <CloudLabel ox={250} x={451} y={57} t="[Rate:0.7" w={42} />
      <CloudLabel ox={250} x={490} y={111} t="[Rate:0" w={32} />
      <CloudLabel ox={250} x={643} y={343} t="[Rate" w={17} />
      <CloudLabel ox={250} x={513} y={377} t="[Rate" w={20} />
      <CloudLabel ox={670} x={163} y={156} t="[Rate" w={17} />
      <CloudLabel ox={670} x={443} y={48} t="09-Rev" w={21} />
      <CloudLabel ox={670} x={1147} y={211} t="[Rate:0." w={37} />
      <CloudLabel ox={670} x={1183} y={265} t="[Rate:0" w={32} />
      <CloudLabel ox={670} x={970} y={318} t="[Rate:0" w={31} />
      <CloudLabel ox={670} x={857} y={384} t="[Rate:0" w={31} />
      <CloudLabel ox={670} x={1138} y={514} t="[Rate:0." w={37} />
    </>
  );
}

/* grey summed peaks of the folder and automation lanes: [from, to, mid, amplitude, floor, lump] */
const ghost = (list: number[][]) => (
  <svg className="absolute left-0 top-0 overflow-visible" width="1553" height="58" fill="#b9bbba">
    {list.map(([a, b, mid, amp, fl, lump = 4, pow = 1.4], i) => (
      <path key={i} d={wavePath(b - a, mid, amp, i + 11, fl, a - 350, lump, pow)} />
    ))}
  </svg>
);

const noiseGhost = [
  [351, 358, 34, 13, 0.8], [377, 381, 34, 19, 0.7], [392, 423, 34, 19, 0.65], [430, 434, 34, 15, 0.6], [436, 450, 34, 20, 0.6], [458, 468, 34, 18, 0.7], [470, 473, 34, 8, 0.6], [559, 561, 34, 19, 0.9],
  [614, 617, 34, 19, 0.9], [900, 902, 34, 19, 0.9], [906, 907, 34, 19, 0.9], [913, 919, 34, 19, 0.6], [975, 981, 34, 18, 0.7], [986, 988, 34, 10, 0.7], [1067, 1074, 34, 18, 0.8], [1202, 1204, 34, 13, 0.7],
  [1452, 1454, 34, 19, 0.7], [1460, 1463, 34, 16, 0.7], [1470, 1472, 34, 19, 0.7], [1495, 1501, 34, 18, 0.8], [1514, 1540, 34, 20, 0.7], [1540, 1545, 34, 8, 0.5], [1580, 1584, 34, 19, 0.8], [1623, 1630, 34, 19, 0.8],
];
const two = (a: number, b: number, amp: number, fl = 0.5) => [[a, b, 25, amp, fl], [a, b, 44, amp, fl]];
const bubGhost = [
  ...two(420, 422, 7), ...two(466, 470, 9, 0.8), ...two(524, 528, 3), ...two(545, 551, 3), ...two(556, 563, 3), ...two(567, 575, 7, 0.6), ...two(578, 586, 7, 0.6), ...two(588, 591, 7, 0.6), ...two(597, 615, 6, 0.5), ...two(618, 624, 4),
  ...two(628, 666, 8, 0.45), [666, 677, 34, 2, 0.2], [739, 805, 34, 20, 0.1], [808, 814, 34, 7, 0.2], [815, 857, 34, 20, 0.2], [857, 885, 34, 20, 0.1], ...two(887, 982, 9, 0.4), [935, 975, 34, 13, 0.4], [982, 987, 34, 6, 0.3],
  [987, 1045, 34, 18, 0.3], ...two(995, 1066, 9, 0.4), [1060, 1108, 34, 20, 0.15], ...two(1105, 1195, 8, 0.35), [1190, 1207, 34, 11, 0.2], ...two(1462, 1468, 6), ...two(1469, 1471, 6), [1502, 1510, 34, 8, 0.4],
  ...two(1562, 1568, 4), ...two(1573, 1580, 4),
];
const cloudGhost = (mid: number, big: number) => [
  [386, 396, mid, 5, 0.4], [483, 561, mid, 5, 0.3], [628, 870, mid, 5, 0.3], [1027, 1140, mid, 3.5, 0.3], [1168, 1200, mid, 5, 0.4],
  [1205, 1385, mid - big * 0.6, big, 0.12, 2, 1.1], [1205, 1385, mid + big * 0.6, big, 0.12, 2, 1.1], [1385, 1402, mid - big * 0.5, big * 0.5, 0.1, 2, 1.4], [1385, 1402, mid + big * 0.5, big * 0.5, 0.1, 2, 1.4],
  [1411, 1413, mid, big * 1.3, 0.9], [1265, 1514, mid, 5, 0.4],
];

function BubblingMain() {
  const pts: string[] = [];
  const back: string[] = [];
  const r = rng(55);
  for (let x = 0; x <= 248; x++) {
    const a = 2 + 13 * Math.exp(-Math.pow((x - 125) / 75, 2)) * (0.25 + 0.75 * Math.pow(r(), 1.5));
    pts.push(`${863 + x},${(34 - a).toFixed(1)}`);
    back.push(`${863 + x},${(34 + a).toFixed(1)}`);
  }
  return (
    <svg className="absolute left-0 top-0" width="1553" height="58" fill="#b9bbba">
      <path d={"M" + pts.join("L") + "L" + back.reverse().join("L") + "Z"} />
    </svg>
  );
}

const Dot = ({ x, y, c, solid }: { x: number; y: number; c: string; solid?: boolean }) => <circle cx={x} cy={y} r="2.500" fill={solid ? c : "#dcdedd"} stroke={c} strokeWidth="1.300" />;

const Lane = ({ h, dark, hi, children }: { h: number; dark?: boolean; hi?: boolean; children?: React.ReactNode }) => (
  <div className={"relative shrink-0 border-b " + (hi ? "border-[#e8eae9] " : "border-[#b6b8b7] ") + (dark ? "bg-[#cfd1d0]" : "bg-[#dcdedd]")} style={{ height: h }}>
    {children}
  </div>
);

const clips = (list: Clip[], base: number) => list.map((k, i) => <ClipView key={i} k={k} seed={base + i} />);

function Arrange() {
  return (
    <div className="relative flex h-[935px] w-[1553px] flex-col overflow-hidden bg-[#d6d8d7]">
      <Lane h={59} hi>{ghost(noiseGhost)}</Lane>
      <Lane h={34}>
        <svg className="absolute left-0 top-[-1px]" width="1553" height="34">
          <path d="M0 4H47L55 19L60 4H1167L1181 17L1187 4H1553V19H0Z" fill="#800000" fillOpacity=".27" />
          <path d="M0 4.500H47L55 19L60 4.500H1167L1181 17L1187 4.500H1553" fill="none" stroke="#800000" strokeWidth="1.200" />
          <Dot x={1} y={4} c="#800000" />
          <Dot x={47} y={4} c="#800000" />
          <Dot x={55} y={18.5} c="#800000" />
          <Dot x={60} y={4} c="#800000" />
          <Dot x={1167} y={4} c="#800000" />
          <Dot x={1181} y={17} c="#800000" solid />
          <Dot x={1187} y={4} c="#800000" />
        </svg>
      </Lane>
      <Lane h={58} dark>{clips(noiseC, 100)}</Lane>
      <Lane h={58}>{clips(noiseL, 130)}</Lane>
      <Lane h={58} dark>{clips(noiseR, 160)}</Lane>
      <Lane h={58}>
        {ghost(bubGhost)}
        <BubblingMain />
      </Lane>
      <Lane h={58} dark>{clips(bubC, 200)}</Lane>
      <Lane h={58}>{clips(bubL, 240)}</Lane>
      <Lane h={58} dark>
        {clips(bubR, 280)}
        <CloudLabel ox={370} x={1238} y={22} t="[Rate:0." w={33} />
      </Lane>
      <Lane h={208} hi>
        <Cloud />
      </Lane>
      <Lane h={44} hi>
        {ghost(cloudGhost(22, 15))}
        <svg className="absolute left-0 top-0" width="1553" height="44">
          <path d="M0 39H298L390 29H851L853 39H1553V42H0Z" fill="#800000" fillOpacity=".27" />
          <path d="M0 39.500H298L390 29.500H851L853 39.500H1553" fill="none" stroke="#800000" strokeWidth="1.200" />
          <Dot x={1} y={39} c="#800000" />
          <Dot x={298} y={39} c="#800000" />
          <Dot x={391} y={29.500} c="#800000" />
          <Dot x={851} y={29.500} c="#800000" />
          <Dot x={853} y={39} c="#800000" solid />
        </svg>
      </Lane>
      <Lane h={35}>
        {ghost(cloudGhost(17, 11))}
        <svg className="absolute left-0 top-0" width="1553" height="35">
          <path d="M0 30H302C345 30 345 4 384 4H852L1024 30H1553V33H0Z" fill="#408080" fillOpacity=".25" />
          <path d="M0 30.500H302C345 30 345 4.500 384 4.500H852L1024 30.500H1553" fill="none" stroke="#408080" strokeWidth="1.200" />
          <Dot x={1} y={30} c="#408080" />
          <Dot x={302} y={30} c="#408080" />
          <Dot x={384} y={4} c="#408080" />
          <Dot x={852} y={4} c="#408080" />
          <Dot x={1024} y={30} c="#408080" />
        </svg>
      </Lane>
      <Lane h={58} dark hi />
      <Lane h={24} dark>
        <svg className="absolute left-0 top-0" width="1553" height="22">
          <path d="M0 12H519V20H536V12H1553V22H0Z" fill="#9c9e9d" />
          <path d="M0 12.500H519V19.500H536V12.500H1553" fill="none" stroke="#000" strokeWidth="1.200" />
          <path d="M517.500 10.500h4v4h-4zM517.500 17.500h4v4h-4zM534.500 10.500h4v4h-4zM534.500 17.500h4v4h-4z" fill="#dcdedd" stroke="#000" />
          <path d="M0 10L3 12.500L0 15Z" />
        </svg>
      </Lane>
      <Lane h={58}>{clips(reverb, 320)}</Lane>
      <div className="absolute inset-y-0 left-[1290px] right-0 bg-black/[.115]" />
      <div className="absolute inset-y-0 left-0 w-px bg-[#7a1010]" />
    </div>
  );
}

function Ruler() {
  const cells = Array.from({ length: 16 }, (_, k) => k);
  return (
    <div className="relative h-[33px] overflow-hidden bg-[#474747]">
      <div className="absolute left-[3px] bottom-0 h-[5px] w-[1287px] bg-white" />
      <div className="relative flex h-full">
        {cells.map((k) => {
          const sec = k * 16;
          return (
            <div
              key={k}
              className="relative h-full w-[103.860px] shrink-0 bg-[repeating-linear-gradient(90deg,#8c8c8c_0,#8c8c8c_1px,transparent_1px,transparent_12.980px)] bg-[length:100%_5px] bg-bottom bg-no-repeat pl-[4px] text-[#adadad]"
            >
              {k > 0 && <div className="absolute left-0 top-[3px] h-[30px] w-px bg-[#9a9a9a]" />}
              <span className="block w-max border-b border-[#9a9a9a] pt-px text-[13px] leading-[13px]">{8 * k + 1}.1.00</span>
              <span className="block pt-px text-[11px] leading-[13px] tracking-[-0.1px]">
                {Math.floor(sec / 60)}:{String(sec % 60).padStart(2, "0")}.000
              </span>
            </div>
          );
        })}
      </div>
      <svg className="absolute left-0 top-0" width="10" height="33">
        <path d="M1 3H8L1 11Z" fill="#6a1616" stroke="#fff" />
        <path d="M1 24L9 24L1 31Z" fill="#bbb" />
      </svg>
      <svg className="absolute left-[1281px] top-[23px]" width="10" height="10">
        <path d="M0 0H9V9Z" fill="#b5b5b5" />
      </svg>
    </div>
  );
}

/* ---------- page ---------- */

const tracks: Record<string, Track> = {
  noise: { name: "Noise", idx: "5", h: 58, vol: -10, pan: 0, folder: "top" },
  nc: { name: "Noise C", idx: "6", h: 58, child: true, vol: -55, pan: 0, dimFolder: true },
  nl: { name: "Noise L", idx: "7", h: 58, child: true, vol: -55, pan: 200, striped: true, dimFolder: true },
  nr: { name: "Noise R", idx: "8", h: 58, child: true, vol: -55, pan: 160, striped: true, folder: "last" },
  bub: { name: "Bubbling", idx: "9", h: 58, vol: -10, pan: 0, fx: true, folder: "top", cut: true },
  bc: { name: "Bubbling C", idx: "10", h: 58, child: true, vol: -50, pan: 0, dimFolder: true },
  bl: { name: "Bubbling L", idx: "11", h: 58, child: true, vol: -60, pan: -90, dots: [G, K, B], dimFolder: true },
  br: { name: "Bubbling R", idx: "12", h: 58, child: true, vol: -65, pan: 95, dots: [G, K, B], selected: true, folder: "last" },
  cloud: { name: "Cloud", idx: "13", h: 208, vol: -70, pan: 0, fx: true, dots: [G, K, B], input: true, dimFolder: true },
  rev: { name: "Reverb", idx: "14", h: 58, vol: -10, pan: 0, fx: true, dots: [G, "#8f8f10", B], dimFolder: true },
  ret: { name: "Reverb return", idx: "15", h: 58, vol: -110, pan: 0, dimFolder: true },
};

const menu: [string, number, number][] = [
  ["File", 28, 0], ["Edit", 31, 0], ["View", 34, 0], ["Insert", 41, 0], ["Item", 34, 3], ["Track", 38, 0], ["Options", 49, 0], ["Actions", 47, 0], ["Help", 41, 0],
];

const Plus = () => (
  <svg width="9" height="9" viewBox="0 0 9 9">
    <path d="M3 0H6V3H9V6H6V9H3V6H0V3H3Z" fill="#5c5c5c" />
  </svg>
);

function Transport() {
  return (
    <div className="flex h-[36px] items-center border-t border-[#262626] bg-[#333]">
      <div className="ml-[4px] flex h-[26px] w-[57px] rounded-full border border-[#1d1d1d] bg-[linear-gradient(180deg,#404040_50%,#333_50%)]">
        <div className="flex flex-1 items-center justify-center border-r border-[#1d1d1d]">
          <svg width="11" height="10">
            <path d="M0 0H2V10H0ZM11 0V10L3 5Z" fill="#808080" />
          </svg>
        </div>
        <div className="flex flex-1 items-center justify-center">
          <svg width="11" height="10">
            <path d="M9 0H11V10H9ZM0 0V10L8 5Z" fill="#808080" />
          </svg>
        </div>
      </div>
      <div className="ml-[4px] flex h-[31px] w-[99px] overflow-hidden rounded-full border border-[#1d1d1d]">
        <div className="flex w-[31px] items-center justify-center bg-[linear-gradient(180deg,#3d3d3d_50%,#2b2b2b_50%)]">
          <div className="size-[9px] bg-[#7c7c7c]" />
        </div>
        <div className="flex w-[37px] items-center justify-center border-x border-[#1d1d1d] bg-[linear-gradient(180deg,#a5afaf,#6f7a7a)]">
          <svg width="10" height="10">
            <path d="M0 0L10 5L0 10Z" fill="#1e1e1e" />
          </svg>
        </div>
        <div className="flex flex-1 items-center justify-center bg-[linear-gradient(180deg,#cdd3d3,#a3abab)]">
          <svg width="7" height="10">
            <path d="M0 0H2V10H0ZM4.500 0H6.500V10H4.500Z" fill="#1e1e1e" />
          </svg>
        </div>
      </div>
      <div className="ml-[4px] flex size-[31px] items-center justify-center rounded-full border border-[#241a18] bg-[linear-gradient(180deg,#7a4b40,#5c352b)]">
        <div className="size-[15px] rounded-full border-[3px] border-[#c7aaa2]" />
      </div>
      <div className="ml-[4px] flex size-[24px] items-center justify-center rounded-full bg-[#7cbabd]">
        <svg width="16" height="16" viewBox="0 0 16 16" fill="none" stroke="#f2fbfb" strokeWidth="2">
          <path d="M6 3A5.300 5.300 0 0 1 12.800 9.500M10 13A5.300 5.300 0 0 1 3.200 6.500" />
          <path d="M9.800 8.500H14.800V13ZM6.200 7.500H1.200V3Z" fill="#f2fbfb" stroke="none" />
        </svg>
      </div>
      <div className="ml-[8px] flex h-[31px] w-[51px] flex-col justify-between bg-[#292929] px-[3px] py-[1px] text-[#8c8c8c]">
        <div className="flex items-center">
          <svg width="12" height="9" viewBox="0 0 12 9" className="shrink-0">
            <path d="M1.500 7L6 2L10.500 7" fill="none" stroke="#8c8c8c" strokeWidth="1.200" />
            <path d="M0 5.500h3v3H0zM4.500 0h3v3h-3zM9 5.500h3v3H9z" fill="#8c8c8c" />
          </svg>
          <span className="ml-[2px] text-[8px] font-bold leading-[13px] tracking-[-0.3px]">GLOBAL</span>
        </div>
        <div className="flex items-center justify-between pr-[1px]">
          <span className="text-[9.500px] font-bold leading-[14px] tracking-[-0.4px]">none</span>
          <DownCircle c="#7d7d7d" s={12} />
        </div>
      </div>
      <div className="ml-[341px] flex h-[35px] w-[360px] items-center justify-between bg-[#2a2a2a] pl-[8px] pr-[7px] text-[#878787]">
        <span className="whitespace-pre text-[27px] font-bold leading-[30px] tracking-[0.25px]">1.1.00 / 0:00.000</span>
        <span className="text-[19px]">[Stopped]</span>
      </div>
      <div className="ml-px flex h-[35px] w-[50px] flex-col items-center justify-between bg-[#2a2a2a] py-[2px] text-[11px] leading-[14px] text-[#a0a0a0]">
        <span>BPM</span>
        <span>120</span>
      </div>
      <div className="ml-[2px] flex h-[35px] w-[37px] items-center justify-center bg-[#2c2c2c] text-[13.500px] text-[#a0a0a0]">4/4</div>
      <div className="ml-[2px] flex h-[35px] w-[140px] flex-col">
        <div className="flex h-[18px] items-start pl-[3px] text-[12.500px] leading-[17px] text-[#8a8a8a]">
          <span className="w-[74px]">Rate:</span>
          <span className="text-[13px]">1.0</span>
        </div>
        <div className="flex h-[17px] items-center bg-[#2a2a2a] pl-[62px]">
          <div className="h-[14px] w-[15px] border-x border-[#555] bg-[linear-gradient(90deg,#999_0,#ddd_42%,#222_44%,#222_54%,#ddd_56%,#999)]" />
        </div>
      </div>
      <div className="ml-[340px] flex items-center text-[16px] text-[#9b9b9b]">
        <span className="w-[96px]">Selection:</span>
        <span className="w-[85px]">1.1.00</span>
        <span className="w-[98px]">100.2.50</span>
        <span>99.1.50</span>
      </div>
    </div>
  );
}

export default function App() {
  return (
    <div className="flex h-[1080px] w-[1920px] flex-col overflow-hidden bg-[#333] font-['Liberation_Sans',Arial,sans-serif]">
      <div className="flex h-[19px] shrink-0 items-center bg-[#d4d0c8] pl-[5px] pr-[6px] font-['DejaVu_Sans_Condensed','DejaVu_Sans',sans-serif] text-[11px] leading-[19px] tracking-[-0.2px] text-black [font-stretch:condensed]">
        {menu.map(([m, w, u]) => (
          <span key={m} className="shrink-0 whitespace-pre pt-[3px]" style={{ width: w }}>
            {m.slice(0, u)}
            <span className="underline underline-offset-1">{m[u]}</span>
            {m.slice(u + 1)}
          </span>
        ))}
        <span className="pt-[3px] tracking-[-0.22px]">[Change media item selection]</span>
        <span className="ml-auto pt-[3px] tracking-[-0.1px]">[44.1kHz 24bit WAV : 4/4ch 2048spls ~46/46ms ASIO]</span>
      </div>

      <div className="flex h-[1025px] shrink-0">
        <div className="flex w-[350px] shrink-0 flex-col">
          <div className="h-[72px]">
            <Toolbar />
          </div>
          <TrackPanel t={tracks.noise} />
          <EnvPanel name="Width" value="100.0%" h={35} pt={7} armed cut />
          <TrackPanel t={tracks.nc} />
          <TrackPanel t={tracks.nl} />
          <TrackPanel t={tracks.nr} />
          <TrackPanel t={tracks.bub} />
          <TrackPanel t={tracks.bc} />
          <TrackPanel t={tracks.bl} />
          <div className="relative">
            <TrackPanel t={tracks.br} />
            <div className="absolute left-[307px] top-[20px] size-[6px] rounded-full border border-[#333] bg-[#c8c8c8]" />
          </div>
          <TrackPanel t={tracks.cloud} />
          <EnvPanel name="Send Volume: Reverb" value="-40.0dB" h={44} pt={8} />
          <EnvPanel name="Wet / ReaEQ" value="0 %" h={35} pt={7} sine />
          <TrackPanel t={tracks.rev} />
          <EnvPanel name="Trim Volume" value="0.00dB" h={24} pt={2} armed />
          <TrackPanel t={tracks.ret} />
          <div className="ml-[6px] mr-[8px] mt-[8px] border-t border-[#6b6b6b] pt-px text-[11px] leading-[14px] tracking-[-0.1px] text-[#b0b0b0]">Bubbling R [sends] 1 [items] 22</div>
        </div>

        <div className="flex min-w-0 flex-1 flex-col">
          <div className="mt-[15px] mb-[12px] h-[12px] w-[1569px] shrink-0 bg-[#494949]" />
          <Ruler />
          <div className="flex h-[935px] shrink-0">
            <Arrange />
            <div className="relative flex flex-1 flex-col items-center pt-[3px]">
              <div className="flex size-[11px] items-center justify-center rounded-full bg-[#1c1c1c] text-[6px] text-[#666]">▲</div>
              <div className="mt-[106px] h-[708px] w-[10px] rounded-full bg-[#505050]">
                <div className="mt-[352px] h-[2px] bg-[#222]" />
              </div>
              <div className="mt-[58px] flex size-[11px] items-center justify-center rounded-full bg-[#1c1c1c] text-[6px] text-[#777]">▼</div>
              <div className="mt-[5px]">
                <Plus />
              </div>
              <div className="mt-[5px] h-px w-[8px] bg-[#1e1e1e]" />
              <div className="mt-[8px] h-[3px] w-[9px] bg-[#5c5c5c]" />
            </div>
          </div>
          <div className="flex h-[18px] items-center pl-[3px] pb-[2px]">
            <div className="flex size-[11px] items-center justify-center rounded-full bg-[#1c1c1c] text-[6px] text-[#666]">◀</div>
            <div className="ml-[5px] flex h-[10px] w-[981px] items-center justify-between rounded-full bg-[#4d4d4d] px-[3px]">
              <div className="size-[5px] rounded-full bg-[#1c1c1c]" />
              <div className="h-[7px] w-[2px] bg-[#1c1c1c]" />
              <div className="size-[5px] rounded-full bg-[#1c1c1c]" />
            </div>
            <div className="ml-auto mr-[19px] flex items-center gap-[5px]">
              <div className="mr-[2px] flex size-[11px] items-center justify-center rounded-full bg-[#1c1c1c] text-[6px] text-[#777]">▶</div>
              <Plus />
              <div className="h-[8px] w-px bg-[#1e1e1e]" />
              <div className="h-[3px] w-[9px] bg-[#5c5c5c]" />
            </div>
          </div>
        </div>
      </div>
      <Transport />
    </div>
  );
}
